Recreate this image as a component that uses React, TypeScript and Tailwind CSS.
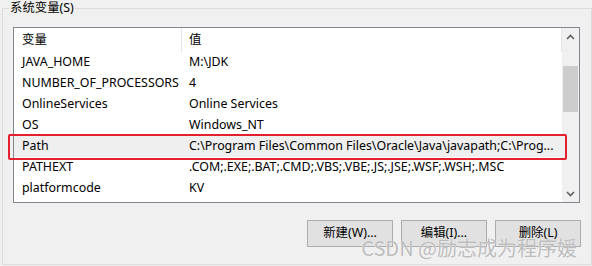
import React from "react";

const rows: [string, string][] = [
  ["JAVA_HOME", "M:\\JDK"],
  ["NUMBER_OF_PROCESSORS", "4"],
  ["OnlineServices", "Online Services"],
  ["OS", "Windows_NT"],
  ["Path", "C:\\Program Files\\Common Files\\Oracle\\Java\\javapath;C:\\Prog..."],
  ["PATHEXT", ".COM;.EXE;.BAT;.CMD;.VBS;.VBE;.JS;.JSE;.WSF;.WSH;.MSC"],
  ["platformcode", "KV"],
];

const font = { fontFamily: '"Noto Sans", "Noto Sans CJK SC", sans-serif' };

export default function App() {
  return (
    <div
      className="relative w-[592px] h-[266px] bg-[#f0f0f0] text-[12.4px] text-black overflow-hidden"
      style={font}
    >
      <fieldset className="ml-[2px] w-[590px] h-[265px] border border-[#dcdcdc] p-0 m-0 flex flex-col">
        <legend className="ml-[6px] px-[1px] leading-[16px] text-[12.4px]">系统变量(S)</legend>
        <div className="ml-[10px] mt-[11px] w-[567px] h-[176px] border border-[#828790] bg-white flex">
          <div className="flex-1 flex flex-col">
            <div className="h-[24px] flex items-center relative">
              <div className="w-[168px] pl-[8px] h-full flex items-center border-r border-[#e5e5e5]">变量</div>
              <div className="flex-1 pl-[7px] h-full flex items-center border-r border-[#e5e5e5]">值</div>
            </div>
            {rows.map(([k, v]) => (
              <div
                key={k}
                className={`h-[21px] flex items-center ${k === "Path" ? "bg-[#efefef]" : ""}`}
              >
                <div className="w-[168px] pl-[8px] whitespace-nowrap">{k}</div>
                <div className="flex-1 pl-[7px] whitespace-nowrap">{v}</div>
              </div>
            ))}
          </div>
          <div className="w-[17px] bg-[#f0f0f0] flex flex-col">
            <div className="h-[17px] flex items-center justify-center">
              <svg width="9" height="6" viewBox="0 0 9 6">
                <path d="M1 5 L4.5 1.5 L8 5" fill="none" stroke="#606060" strokeWidth="1.6" />
              </svg>
            </div>
            <div className="flex-1 flex flex-col px-[1px]">
              <div className="mt-[21px] h-[46px] bg-[#cdcdcd]" />
            </div>
            <div className="h-[17px] flex items-center justify-center">
              <svg width="9" height="6" viewBox="0 0 9 6">
                <path d="M1 1 L4.5 4.5 L8 1" fill="none" stroke="#606060" strokeWidth="1.6" />
              </svg>
            </div>
          </div>
        </div>
        <div className="mt-[17px] mr-[10px] flex justify-end gap-[8px]">
          {["新建(W)...", "编辑(I)...", "删除(L)"].map((t) => (
            <button
              key={t}
              className="w-[86px] h-[27px] bg-[#e1e1e1] border border-[#adadad] flex items-center justify-center text-[12.4px]"
            >
              {t}
            </button>
          ))}
        </div>
      </fieldset>
      <div className="absolute left-[8px] top-[134px] w-[559px] h-[26px] border-2 border-[#e5202e] rounded-[2px] pointer-events-none" />
      <div
        className="absolute right-[15px] top-[235px] text-[20px] leading-[26px] text-[#bdbdbd] whitespace-nowrap pointer-events-none"
        style={{ fontFamily: '"Noto Sans CJK SC", sans-serif', textShadow: "0 0 1px #ffffff" }}
      >
        CSDN @励志成为程序媛
      </div>
    </div>
  );
}
